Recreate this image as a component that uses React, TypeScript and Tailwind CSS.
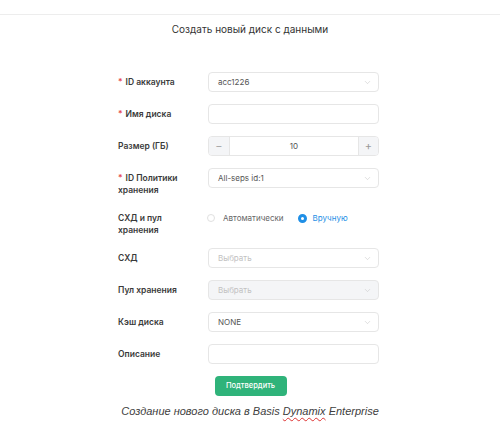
import { ChevronDown } from "lucide-react";

const font = { fontFamily: "Inter, 'Noto Sans', sans-serif" };

const Label = ({ lines, required }: { lines: string[]; required?: boolean }) => (
  <div className="w-[90px] shrink-0 pt-[4px] text-[8.5px] leading-[12px] font-semibold text-[#3a3a3a]">
    {lines.map((l, i) => (
      <div key={i}>
        {i === 0 && required && <span className="text-[#e5484d] mr-[3px]">*</span>}
        {l}
      </div>
    ))}
  </div>
);

const Select = ({ value, placeholder, disabled }: { value?: string; placeholder?: string; disabled?: boolean }) => (
  <div
    className={`w-[171px] h-[20px] rounded-[4px] border border-[#e6e6e6] flex items-center justify-between pl-[9px] pr-[6px] ${
      disabled ? "bg-[#f4f5f7]" : "bg-white"
    }`}
  >
    <span className={`text-[8px] ${value ? "text-[#555]" : "text-[#c2c2c2]"}`}>{value ?? placeholder}</span>
    <ChevronDown size={9} strokeWidth={1.5} className="text-[#c8c8c8]" />
  </div>
);

const Input = () => <div className="w-[171px] h-[20px] rounded-[4px] border border-[#e6e6e6] bg-white" />;

const Row = ({ children }: { children: React.ReactNode }) => <div className="flex items-start mb-[12px]">{children}</div>;

export default function App() {
  return (
    <div className="w-[500px] h-[430px] bg-white overflow-hidden" style={font}>
      <div className="h-[15px] border-b border-[#ededed]" />
      <h1 className="text-center text-[10px] text-[#333] mt-[7px] leading-[14px]">Создать новый диск с данными</h1>

      <div className="pl-[118px] mt-[36px]">
        <Row>
          <Label lines={["ID аккаунта"]} required />
          <Select value="acc1226" />
        </Row>
        <Row>
          <Label lines={["Имя диска"]} required />
          <Input />
        </Row>
        <Row>
          <Label lines={["Размер (ГБ)"]} />
          <div className="w-[171px] h-[20px] rounded-[4px] border border-[#e6e6e6] flex overflow-hidden">
            <div className="w-[21px] bg-[#f4f5f7] border-r border-[#e6e6e6] flex items-center justify-center text-[#aaa] text-[11px]">
              −
            </div>
            <div className="flex-1 flex items-center justify-center text-[8px] text-[#555]">10</div>
            <div className="w-[20px] bg-[#f4f5f7] border-l border-[#e6e6e6] flex items-center justify-center text-[#999] text-[11px]">
              +
            </div>
          </div>
        </Row>
        <Row>
          <Label lines={["ID Политики", "хранения"]} required />
          <Select value="All-seps id:1" />
        </Row>
        <Row>
          <Label lines={["СХД и пул", "хранения"]} />
          <div className="h-[20px] flex items-center text-[8px]">
            <span className="w-[8px] h-[8px] rounded-full border border-[#e0e0e0] ml-[-1px]" />
            <span className="ml-[8px] text-[#666]">Автоматически</span>
            <span className="w-[9px] h-[9px] rounded-full border-[3px] border-[#1f8fe6] ml-[14px]" />
            <span className="ml-[6px] text-[#1f8fe6]">Вручную</span>
          </div>
        </Row>
        <Row>
          <Label lines={["СХД"]} />
          <Select placeholder="Выбрать" />
        </Row>
        <Row>
          <Label lines={["Пул хранения"]} />
          <Select placeholder="Выбрать" disabled />
        </Row>
        <Row>
          <Label lines={["Кэш диска"]} />
          <Select value="NONE" />
        </Row>
        <Row>
          <Label lines={["Описание"]} />
          <Input />
        </Row>
      </div>

      <div className="flex justify-center pr-[1px] mt-[7px]">
        <button className="w-[72px] h-[20px] ml-[2px] rounded-[4px] bg-[#2fb37a] text-white text-[7.5px] font-medium">
          Подтвердить
        </button>
      </div>

      <p
        className="text-center italic text-[11px] text-[#404040] mt-[8px] leading-[14px]"
        style={{ fontFamily: "'Liberation Sans', Arial, sans-serif" }}
      >
        Создание нового диска в Basis{" "}
        <span className="underline decoration-wavy decoration-[#d33] decoration-[1px] underline-offset-2">Dynamix</span>{" "}
        Enterprise
      </p>
    </div>
  );
}
